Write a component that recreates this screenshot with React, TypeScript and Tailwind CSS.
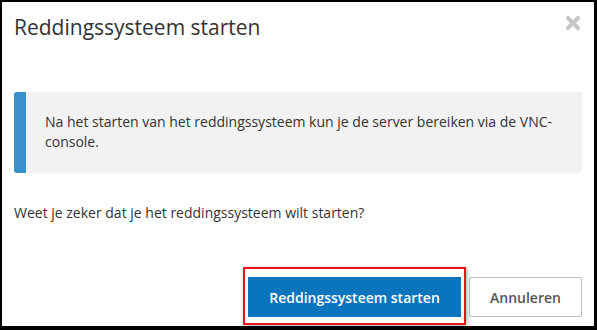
import { useState } from 'react'

const FONT = "font-['Open_Sans',_'Liberation_Sans',_sans-serif]"

function CloseIcon() {
  return (
    <svg width="16" height="16" viewBox="0 0 16 16" aria-hidden="true">
      <path d="M3 3 L13 13 M13 3 L3 13" stroke="#c6c6c6" strokeWidth="4" strokeLinecap="round" />
    </svg>
  )
}

export default function App() {
  const [open, setOpen] = useState(true)

  if (!open) return null

  return (
    <div className={`${FONT} w-[597px] h-[330px] bg-white text-[#333] border-black border-l-2 border-t-2 border-r-[3px] border-b-[4px] flex flex-col`}>
      {/* Header */}
      <div className="flex items-start justify-between pl-[12px] pr-[13px] pt-[11px]">
        <h2 className="text-[21px] leading-[28px] font-normal text-[#333]">Reddingssysteem starten</h2>
        <button type="button" onClick={() => setOpen(false)} className="mt-[2px] p-0 leading-none">
          <CloseIcon />
        </button>
      </div>

      {/* Body */}
      <div className="px-[12px] mt-[51px]">
        <div className="flex rounded-[3px] overflow-hidden bg-[#f2f2f2]">
          <div className="w-[12px] shrink-0 bg-[#3990cb]" />
          <p className="text-[14px] leading-[20px] pl-[19px] pr-[12px] pt-[20px] pb-[21px]">
            Na het starten van het reddingssysteem kun je de server bereiken via de VNC-console.
          </p>
        </div>

        <p className="text-[14px] leading-[20px] mt-[30px]">
          Weet je zeker dat je het reddingssysteem wilt starten?
        </p>
      </div>

      {/* Footer */}
      <div className="mt-auto flex justify-end gap-[8px] pr-[12px] pb-[9px]">
        <div className="relative">
          <div className="absolute -left-[5px] -right-[5px] -top-[10px] -bottom-[8px] border-[2.5px] border-[#e8141b] shadow-[1px_1px_4px_rgba(0,0,0,0.35)] pointer-events-none" />
          <button type="button" className="w-[213px] h-[40px] bg-[#0a74bd] text-white text-[14px] font-semibold">
            Reddingssysteem starten
          </button>
        </div>
        <button
          type="button"
          onClick={() => setOpen(false)}
          className="w-[113px] h-[40px] bg-white border border-[#bdbdbd] rounded-[2px] text-[#555] text-[14px] font-semibold"
        >
          Annuleren
        </button>
      </div>
    </div>
  )
}
